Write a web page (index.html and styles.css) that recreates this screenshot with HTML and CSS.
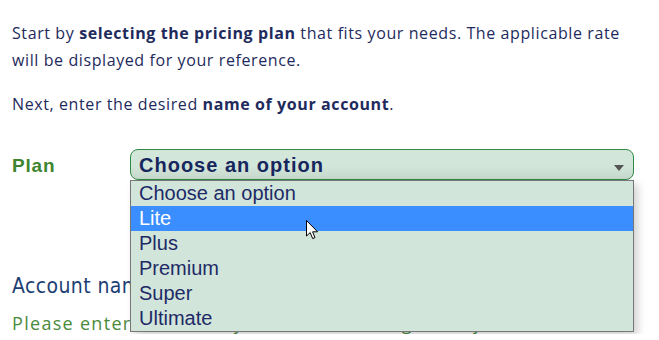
FILE: index.html
```html
<!DOCTYPE html>
<html lang="en">
<head>
<meta charset="utf-8">
<title>Plan</title>
<link rel="stylesheet" href="styles.css">
</head>
<body>
<main class="page">
  <p class="intro">Start by <strong>selecting the pricing plan</strong> that fits your needs. The applicable rate will be displayed for your reference.</p>
  <p class="intro">Next, enter the desired <strong>name of your account</strong>.</p>

  <div class="field-row">
    <label class="field-label">Plan</label>
    <div class="select-wrap">
      <div class="select">
        <span class="select-value">Choose an option</span>
        <span class="arrow"></span>
      </div>
      <ul class="listbox">
        <li class="option">Choose an option</li>
        <li class="option selected">Lite</li>
        <li class="option">Plus</li>
        <li class="option">Premium</li>
        <li class="option">Super</li>
        <li class="option">Ultimate</li>
      </ul>
      <svg class="cursor" width="13" height="20" viewBox="0 0 13 20">
        <path d="M0.5 0.5 L0.5 16 L4.2 12.6 L6.7 18.6 L9 17.6 L6.6 11.8 L11.6 11.8 Z" fill="#fff" stroke="#000" stroke-width="1" stroke-linejoin="miter"/>
      </svg>
    </div>
  </div>

  <section class="account">
    <h3 class="account-title">Account name</h3>
    <p class="hint">Please enter the name you would like, e.g. family.</p>
  </section>
</main>
</body>
</html>
```

FILE: styles.css
```css
html, body {
  margin: 0;
  padding: 0;
  background: #ffffff;
}

.page {
  padding: 20px 25px 0 12px;
  font-family: "Open Sans", "Noto Sans", sans-serif;
  color: #1e2b5c;
}

.intro {
  margin: 0 0 17.5px 0;
  font-size: 16px;
  line-height: 26.5px;
  letter-spacing: 0.6px;
}

.intro strong {
  font-weight: 700;
}

.field-row {
  display: flex;
  align-items: center;
  margin-top: 32px;
}

.field-label {
  width: 118px;
  flex: 0 0 118px;
  font-family: "Liberation Sans", Arial, sans-serif;
  font-weight: 700;
  font-size: 19px;
  letter-spacing: 0.8px;
  color: #3f8530;
  padding-top: 2px;
}

.select-wrap {
  position: relative;
  flex: 1;
}

.select {
  display: flex;
  align-items: center;
  justify-content: space-between;
  height: 29px;
  padding: 0 9px 0 8px;
  border: 1px solid #2f8a45;
  border-radius: 8px;
  background: linear-gradient(#d3e6da 0%, #d3e6da 55%, #c6d8cc 100%);
}

.select-value {
  font-family: "Liberation Sans", Arial, sans-serif;
  font-weight: 700;
  font-size: 20px;
  letter-spacing: 1px;
  color: #17275e;
  line-height: 29px;
  padding-top: 2px;
}

.arrow {
  width: 0;
  height: 0;
  margin-top: 6px;
  border-left: 5px solid transparent;
  border-right: 5px solid transparent;
  border-top: 6px solid #555555;
}

.listbox {
  position: absolute;
  left: 0;
  right: 0;
  top: 31px;
  margin: 0;
  padding: 0;
  list-style: none;
  background: #d2e5da;
  border: 1px solid #767676;
  box-shadow: 4px 4px 8px rgba(0, 0, 0, 0.18);
  z-index: 2;
}

.option {
  height: 25px;
  line-height: 25px;
  padding-left: 8px;
  font-family: "Liberation Sans", Arial, sans-serif;
  font-size: 20px;
  color: #1d2a66;
}

.option.selected {
  background: #3b8eff;
  color: #ffffff;
}

.cursor {
  position: absolute;
  left: 176px;
  top: 71px;
  z-index: 3;
}

.account {
  margin-top: 94px;
}

.account-title {
  margin: 0;
  font-family: "DejaVu Sans Condensed", "DejaVu Sans", sans-serif;
  font-weight: 400;
  font-size: 21px;
  letter-spacing: 0.4px;
  color: #1d3f74;
  line-height: 24px;
}

.hint {
  margin: 14px 0 0 0;
  font-family: "Open Sans", sans-serif;
  font-size: 18px;
  letter-spacing: 1.3px;
  color: #4a8a3c;
  line-height: 22px;
  white-space: nowrap;
}
```
